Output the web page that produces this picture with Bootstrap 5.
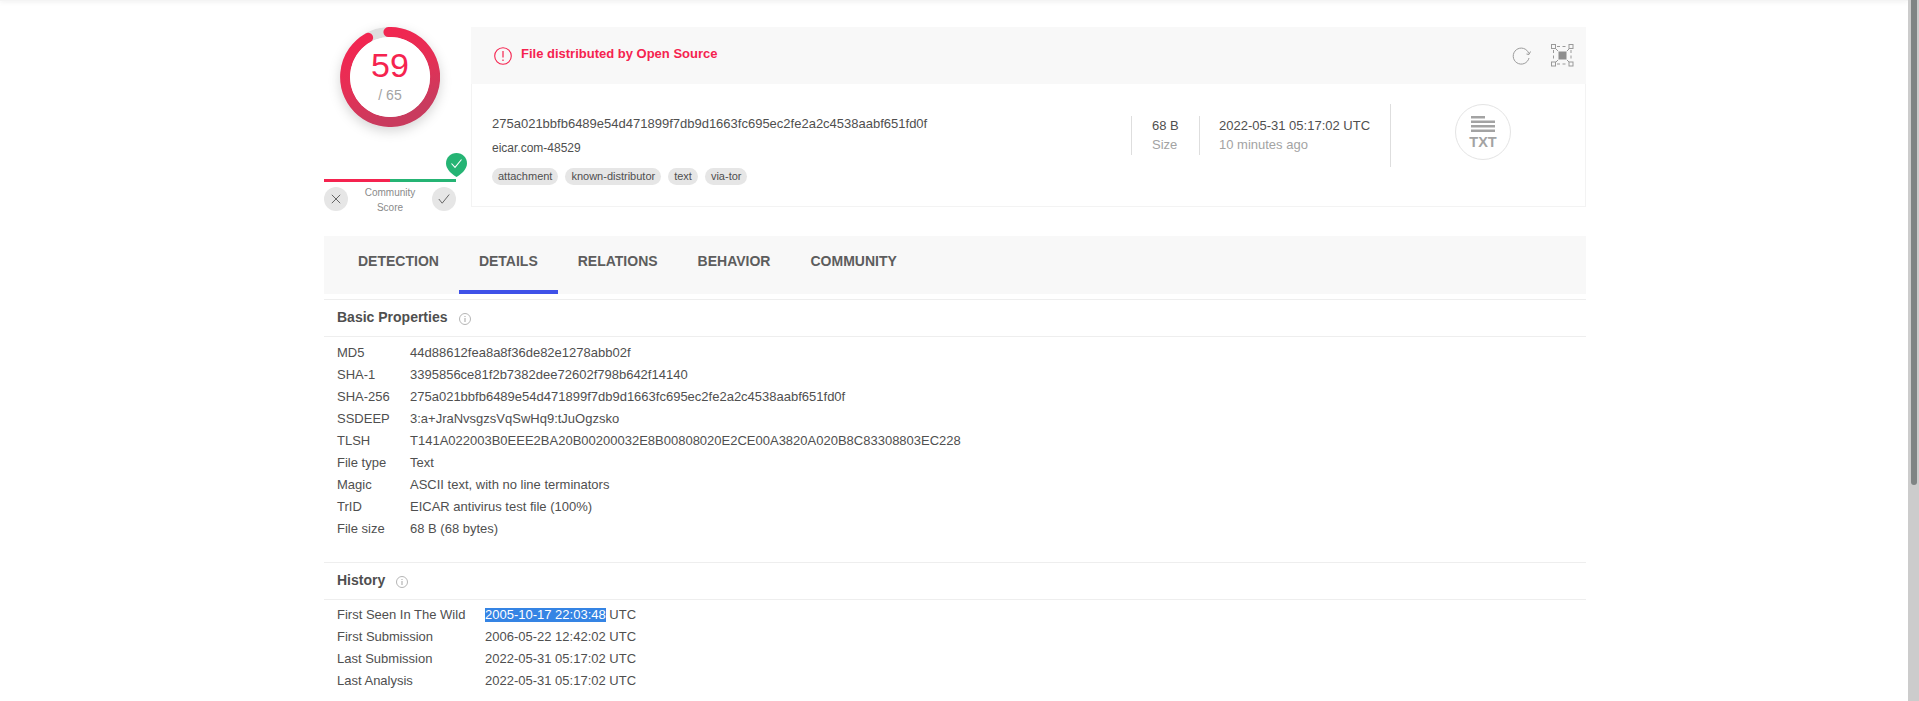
<!DOCTYPE html>
<html lang="en">
<head>
<meta charset="utf-8">
<title>VirusTotal - File details</title>
<link rel="stylesheet" href="https://cdn.jsdelivr.net/npm/bootstrap@5.3.0/dist/css/bootstrap.min.css">
<style>
html,body{height:701px;overflow:hidden}
body{font-family:"Liberation Sans",Arial,sans-serif;font-size:13px;line-height:16px;color:#4f4f4f;background:#fff}
.page-main{width:1908px;height:701px;overflow:hidden;flex:none}
.top-shade{height:1px;background:#f4f4f4;box-shadow:0 0 5px rgba(0,0,0,.22)}
.wrap-main{width:1262px;margin-left:324px;padding-top:26px}
.fake-scroll{width:11px;height:701px;background:#ccc;flex:none}
.fake-thumb{width:6px;height:485px;margin-left:3px;background:#7f8484;border-radius:0 0 3px 3px}
.side-col{width:132px;height:180px;flex:none;margin-right:15px}
.ring-box{width:100px;height:100px;margin:0 auto;display:grid;justify-items:center}
.ring-box>*{grid-area:1/1}
.ring-svg{filter:drop-shadow(0 4px 6px rgba(0,0,0,.16))}
.score-big{font-size:34px;line-height:34px;color:#f5234f;margin-top:21px;position:relative}
.score-sub{font-size:14px;line-height:16px;color:#a3a3a3;margin-top:60px;position:relative}
.vote-wrap{margin-top:52px;position:relative}
.vote-bar{height:3px;width:132px;background:linear-gradient(90deg,#f5234f 50%,#25b474 50%)}
.vote-pin{position:absolute;left:122px;top:-26px}
.vote-row{margin-top:5px;width:132px}
.vote-btn{width:24px;height:24px;border-radius:50%;background:#e6e6e6;flex:none}
.vote-label{font-size:10px;line-height:15px;color:#8a8a8a;text-align:center;margin-top:-2px}
.file-panel{width:1115px;height:180px;border:1px solid #f3f3f3;border-top:0}
.panel-head{height:57px;background:#f8f8f8;margin:0 -1px;padding:0 12px 0 23px}
.alert-title{font-size:13px;font-weight:700;color:#f5234f;margin-left:9px;position:relative;top:-2px}
.panel-body{height:122px}
.hash-col{width:659px;padding:32px 0 0 20px;flex:none}
.file-name{margin-top:8px;font-size:12px}
.tag-row{margin-top:12px;gap:7px}
.tag-pill{font-size:11px;line-height:17px;padding:0 6px;background:#e6e6e6;border-radius:9px;color:#4f4f4f}
.stat-col{margin-top:32px;height:39px;border-left:1px solid #dedede;padding-left:20px;line-height:19px;flex:none}
.stat-size{width:68px}
.stat-date{width:191px;padding-left:19px}
.muted-line{color:#a3a3a3}
.type-col{margin-top:20px;height:63px;border-left:1px solid #dedede;flex:none;width:194px;padding-left:64px}
.type-badge{width:56px;height:56px;border:1px solid #e4e4e4;border-radius:50%;color:#a3a3a3;padding-top:11px}
.type-text{font-size:14.5px;font-weight:700;line-height:15px;margin-top:2px}
.tab-strip{height:58px;background:#f8f8f8;margin-top:29px;padding-left:14px}
.tab-item{padding:17px 20px 0;font-size:14px;font-weight:700;line-height:16px;color:#5d5d5d;height:58px}
.tab-item.is-on{border-bottom:4px solid #3f51e8}
.section-head{height:38px;border-top:1px solid #eee;border-bottom:1px solid #eee;padding:0 0 3px 13px}
.section-head h2{font-size:14px;font-weight:700;line-height:16px;margin:0;color:#4f4f4f}
.info-ico{margin-left:11px;position:relative;top:2px}
.reload-ico{margin-right:19px}
.first-sec{margin-top:5px}
.prop-grid{display:grid;padding:5px 0 0 13px;grid-auto-rows:22px;align-items:center}
.prop-basic{grid-template-columns:73px 1fr;height:225px}
.prop-hist{grid-template-columns:148px 1fr;padding-top:4px}
.sel-text{background:#3584e4;color:#fff;display:inline-block;line-height:14px}
</style>
</head>
<body class="d-flex">
<div class="page-main">
  <div class="top-shade"></div>
  <div class="wrap-main">
    <div class="d-flex">
      <div class="side-col">
        <div class="ring-box">
          <svg class="ring-svg" width="100" height="100" viewBox="0 0 100 100">
            <defs><linearGradient id="ringgrad" x1="0" y1="0" x2="0.35" y2="1"><stop offset="0" stop-color="#f5234f"/><stop offset=".55" stop-color="#e62f55"/><stop offset="1" stop-color="#c93b5e"/></linearGradient></defs>
            <circle cx="50" cy="50" r="50" fill="#fff"/>
            <circle cx="50" cy="50" r="45" fill="none" stroke="#dedede" stroke-width="10"/>
            <path d="M50 5A45 45 0 1 1 29.5 10" transform="rotate(-2 50 50)" fill="none" stroke="url(#ringgrad)" stroke-width="10" stroke-linecap="round"/>
            <circle cx="50" cy="50" r="40" fill="#fff"/>
          </svg>
          <div class="score-big">59</div>
          <div class="score-sub">/ 65</div>
        </div>
        <div class="vote-wrap">
          <svg class="vote-pin" width="21" height="24" viewBox="0 0 21 24">
            <path d="M10.5 0C16.4 0 21 4.6 21 10.4 21 16.5 14.5 21.5 10.5 24 6.5 21.5 0 16.5 0 10.4 0 4.6 4.600 0 10.500 0Z" fill="#25b474"/>
            <path d="M5.500 10.500l3.500 3.800 6.500-7.800" fill="none" stroke="#fff" stroke-width="1.100"/>
          </svg>
          <div class="vote-bar"></div>
          <div class="vote-row d-flex justify-content-between">
            <div class="vote-btn d-flex align-items-center justify-content-center">
              <svg width="10" height="10" viewBox="0 0 10 10"><path d="M.8.800l8.400 8.400M9.200.800L.8 9.200" stroke="#666" stroke-width="1" fill="none"/></svg>
            </div>
            <div class="vote-label">Community<br>Score</div>
            <div class="vote-btn d-flex align-items-center justify-content-center">
              <svg width="12" height="10" viewBox="0 0 12 10"><path d="M.8 5l3.400 4.200L11.200.500" stroke="#666" stroke-width="1" fill="none"/></svg>
            </div>
          </div>
        </div>
      </div>
      <div class="file-panel">
        <div class="panel-head d-flex align-items-center">
          <svg width="18" height="18" viewBox="0 0 18 18"><circle cx="9" cy="9" r="8.300" fill="none" stroke="#f5234f" stroke-width="1.100"/><path d="M9 4v6.500M9 12.500v1.500" stroke="#f5234f" stroke-width="1.200" fill="none"/></svg>
          <div class="alert-title">File distributed by Open Source</div>
          <div class="ms-auto d-flex align-items-center">
            <svg class="reload-ico" width="20" height="18" viewBox="0 0 20 18"><path d="M16.800 6.500A8 8 0 1 0 17 11" fill="none" stroke="#9a9a9a" stroke-width="1"/><path d="M14.500 7l2.500.5 1.500-3" fill="none" stroke="#9a9a9a" stroke-width="1"/></svg>
            <svg class="box-ico" width="23" height="23" viewBox="0 0 23 23">
              <g fill="none" stroke="#9a9a9a" stroke-width="1"><rect x=".5" y=".5" width="4" height="4"/><rect x="18" y=".5" width="4" height="4"/><rect x=".5" y="18" width="4" height="4"/><rect x="18" y="18" width="4" height="4"/>
              <path stroke-dasharray="3 2.500" d="M6 2.500h11M6 20h11M2.500 6v11M20 6v11M5 5l3 3M18 5l-3 3M5 18l3-3M18 18l-3-3"/></g>
              <rect x="7.500" y="7.500" width="8" height="8" fill="#8e8e8e"/>
            </svg>
          </div>
        </div>
        <div class="panel-body d-flex">
          <div class="hash-col">
            <div>275a021bbfb6489e54d471899f7db9d1663fc695ec2fe2a2c4538aabf651fd0f</div>
            <div class="file-name">eicar.com-48529</div>
            <div class="tag-row d-flex">
              <span class="tag-pill">attachment</span><span class="tag-pill">known-distributor</span><span class="tag-pill">text</span><span class="tag-pill">via-tor</span>
            </div>
          </div>
          <div class="stat-col stat-size"><div>68 B</div><div class="muted-line">Size</div></div>
          <div class="stat-col stat-date"><div>2022-05-31 05:17:02 UTC</div><div class="muted-line">10 minutes ago</div></div>
          <div class="type-col">
            <div class="type-badge d-flex flex-column align-items-center">
              <svg width="24" height="17" viewBox="0 0 24 17"><path d="M0 0h14v2.500H0zM0 4.500h24v2.500H0zM0 9h24v2.500H0zM0 13.500h24v2.500H0z" fill="#a3a3a3"/></svg>
              <div class="type-text">TXT</div>
            </div>
          </div>
        </div>
      </div>
    </div>
    <div class="tab-strip d-flex">
      <div class="tab-item">DETECTION</div>
      <div class="tab-item is-on">DETAILS</div>
      <div class="tab-item">RELATIONS</div>
      <div class="tab-item">BEHAVIOR</div>
      <div class="tab-item">COMMUNITY</div>
    </div>
    <div class="section-head first-sec d-flex align-items-center">
      <h2>Basic Properties</h2>
      <svg class="info-ico" width="12" height="12" viewBox="0 0 12 12"><circle cx="6" cy="6" r="5.500" fill="none" stroke="#b5b5b5"/><path d="M6 5v4M6 3v1" stroke="#a5a5a5" fill="none"/></svg>
    </div>
    <div class="prop-grid prop-basic">
      <div>MD5</div><div>44d88612fea8a8f36de82e1278abb02f</div>
      <div>SHA-1</div><div>3395856ce81f2b7382dee72602f798b642f14140</div>
      <div>SHA-256</div><div>275a021bbfb6489e54d471899f7db9d1663fc695ec2fe2a2c4538aabf651fd0f</div>
      <div>SSDEEP</div><div>3:a+JraNvsgzsVqSwHq9:tJuOgzsko</div>
      <div>TLSH</div><div>T141A022003B0EEE2BA20B00200032E8B00808020E2CE00A3820A020B8C83308803EC228</div>
      <div>File type</div><div>Text</div>
      <div>Magic</div><div>ASCII text, with no line terminators</div>
      <div>TrID</div><div>EICAR antivirus test file (100%)</div>
      <div>File size</div><div>68 B (68 bytes)</div>
    </div>
    <div class="section-head d-flex align-items-center">
      <h2>History</h2>
      <svg class="info-ico" width="12" height="12" viewBox="0 0 12 12"><circle cx="6" cy="6" r="5.500" fill="none" stroke="#b5b5b5"/><path d="M6 5v4M6 3v1" stroke="#a5a5a5" fill="none"/></svg>
    </div>
    <div class="prop-grid prop-hist">
      <div>First Seen In The Wild</div><div><span class="sel-text">2005-10-17 22:03:48</span> UTC</div>
      <div>First Submission</div><div>2006-05-22 12:42:02 UTC</div>
      <div>Last Submission</div><div>2022-05-31 05:17:02 UTC</div>
      <div>Last Analysis</div><div>2022-05-31 05:17:02 UTC</div>
    </div>
  </div>
</div>
<div class="fake-scroll"><div class="fake-thumb"></div></div>
<script src="https://cdn.jsdelivr.net/npm/bootstrap@5.3.0/dist/js/bootstrap.bundle.min.js"></script>
</body>
</html>
